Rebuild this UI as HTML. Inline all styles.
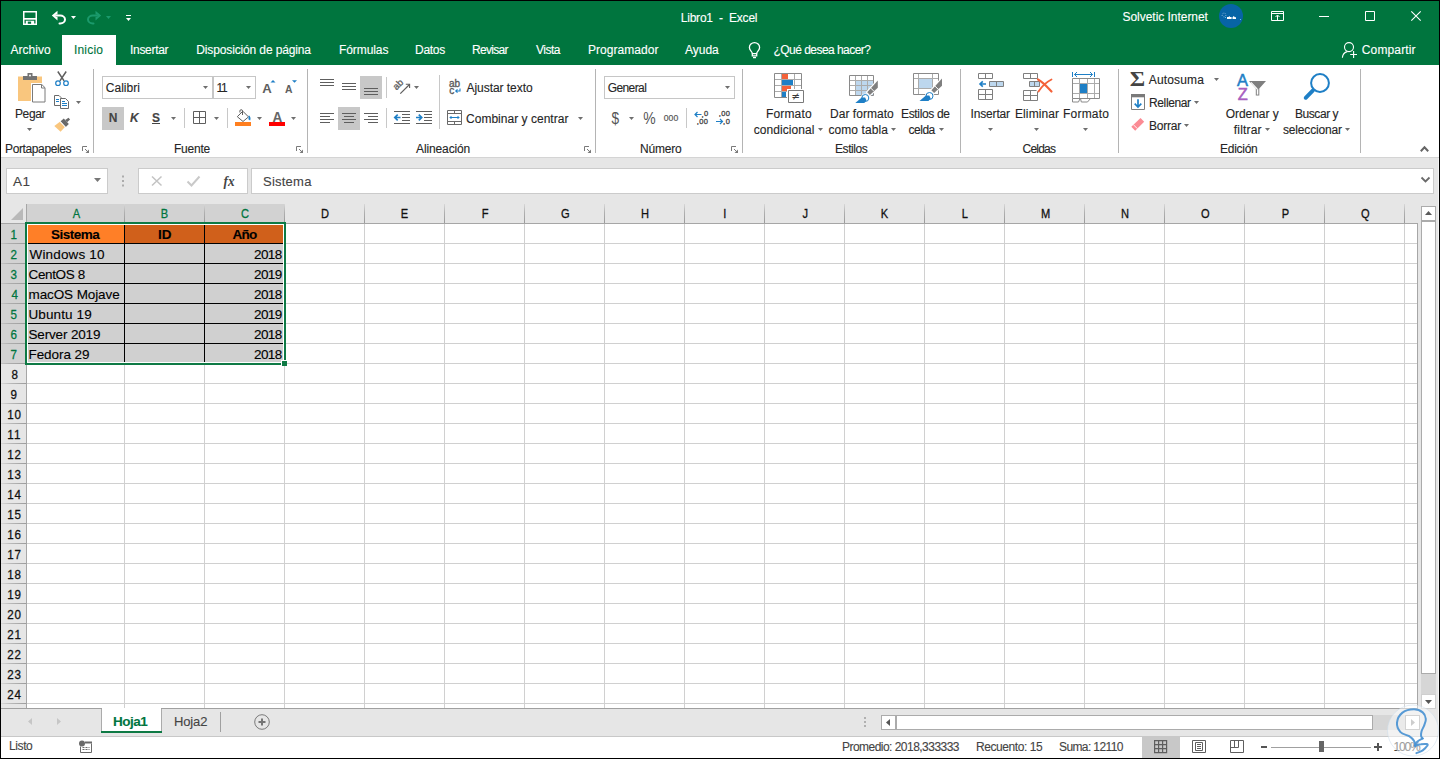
<!DOCTYPE html>
<html lang="es"><head><meta charset="utf-8"><title>Libro1 - Excel</title>
<style>
html,body{margin:0;padding:0;}
body{width:1440px;height:759px;overflow:hidden;background:#000;position:relative;font-family:'Liberation Sans',sans-serif;}
#app{position:absolute;left:0;top:0;width:1440px;height:759px;overflow:hidden;}
#app div,#app svg,#app span{position:absolute;box-sizing:content-box;}
#app svg{overflow:visible;}
.t{white-space:pre;line-height:20px;height:20px;-webkit-text-stroke:0.12px currentColor;}
</style></head>
<body>
<div id="app">
<div style="left:1px;top:1px;width:1438px;height:64px;background:#00753E;"></div>
<div style="left:62px;top:35px;width:54px;height:30px;background:#FFFFFF;"></div>
<div style="left:1px;top:65px;width:1438px;height:92px;background:#FFFFFF;"></div>
<div style="left:1px;top:157px;width:1438px;height:1px;background:#D4D4D4;"></div>
<div style="left:1px;top:158px;width:1438px;height:46px;background:#E6E6E6;"></div>
<div style="left:1px;top:204px;width:1438px;height:505px;background:#E6E6E6;"></div>
<div style="left:27px;top:224px;width:1390px;height:484px;background:#FFFFFF;"></div>
<div style="left:1px;top:709px;width:1438px;height:27px;background:#E6E6E6;"></div>
<div style="left:1px;top:736px;width:1438px;height:1px;background:#C8C8C8;"></div>
<div style="left:1px;top:737px;width:1438px;height:21px;background:#FFFFFF;"></div>
<div style="left:1438px;top:158px;width:1px;height:579px;background:#F4F4F4;"></div>
<span class="t" style="left:680.75px;top:8px;font-size:12px;color:#fff;letter-spacing:-0.217px;">Libro1  -  Excel</span>
<span class="t" style="left:1122.5px;top:7px;font-size:12px;color:#fff;letter-spacing:-0.037px;">Solvetic Internet</span>
<div style="left:1219px;top:4px;width:24px;height:24px;border-radius:12px;background:#0764A6"></div>
<span class="t" style="left:10.5px;top:40px;font-size:12px;color:#fff;letter-spacing:0.017px;">Archivo</span>
<span class="t" style="left:130.0px;top:40px;font-size:12px;color:#fff;letter-spacing:-0.300px;">Insertar</span>
<span class="t" style="left:196.25px;top:40px;font-size:12px;color:#fff;letter-spacing:-0.133px;">Disposición de página</span>
<span class="t" style="left:339.0px;top:40px;font-size:12px;color:#fff;letter-spacing:-0.086px;">Fórmulas</span>
<span class="t" style="left:415.0px;top:40px;font-size:12px;color:#fff;letter-spacing:-0.275px;">Datos</span>
<span class="t" style="left:472.0px;top:40px;font-size:12px;color:#fff;letter-spacing:-0.683px;">Revisar</span>
<span class="t" style="left:536.0px;top:40px;font-size:12px;color:#fff;letter-spacing:-0.525px;">Vista</span>
<span class="t" style="left:588.0px;top:40px;font-size:12px;color:#fff;letter-spacing:0.040px;">Programador</span>
<span class="t" style="left:685.0px;top:40px;font-size:12px;color:#fff;letter-spacing:-0.025px;">Ayuda</span>
<span class="t" style="left:773.5px;top:40px;font-size:12px;color:#fff;letter-spacing:-0.538px;">¿Qué desea hacer?</span>
<span class="t" style="left:1361.75px;top:40px;font-size:12px;color:#fff;letter-spacing:0.144px;">Compartir</span>
<span class="t" style="left:74.0px;top:40px;font-size:12px;color:#00753E;letter-spacing:0.180px;">Inicio</span>
<span class="t" style="left:5.0px;top:139px;font-size:12px;color:#262626;letter-spacing:-0.373px;">Portapapeles</span>
<span class="t" style="left:174.0px;top:139px;font-size:12px;color:#262626;letter-spacing:-0.220px;">Fuente</span>
<span class="t" style="left:416.0px;top:139px;font-size:12px;color:#262626;letter-spacing:-0.122px;">Alineación</span>
<span class="t" style="left:640.0px;top:139px;font-size:12px;color:#262626;letter-spacing:-0.220px;">Número</span>
<span class="t" style="left:835.0px;top:139px;font-size:12px;color:#262626;letter-spacing:-0.433px;">Estilos</span>
<span class="t" style="left:1022.5px;top:139px;font-size:12px;color:#262626;letter-spacing:-0.780px;">Celdas</span>
<span class="t" style="left:1220.0px;top:139px;font-size:12px;color:#262626;letter-spacing:-0.267px;">Edición</span>
<div style="left:93px;top:69px;width:1px;height:84px;background:#B4B4B4;"></div>
<div style="left:307px;top:69px;width:1px;height:84px;background:#B4B4B4;"></div>
<div style="left:595px;top:69px;width:1px;height:84px;background:#B4B4B4;"></div>
<div style="left:742px;top:69px;width:1px;height:84px;background:#B4B4B4;"></div>
<div style="left:960px;top:69px;width:1px;height:84px;background:#B4B4B4;"></div>
<div style="left:1118px;top:69px;width:1px;height:84px;background:#B4B4B4;"></div>
<div style="left:1360px;top:69px;width:1px;height:84px;background:#B4B4B4;"></div>
<div style="left:184px;top:108px;width:1px;height:20px;background:#C8C8C8;"></div>
<div style="left:227px;top:108px;width:1px;height:20px;background:#C8C8C8;"></div>
<div style="left:386px;top:77px;width:1px;height:21px;background:#C8C8C8;"></div>
<div style="left:386px;top:108px;width:1px;height:20px;background:#C8C8C8;"></div>
<div style="left:439px;top:75px;width:1px;height:54px;background:#C8C8C8;"></div>
<div style="left:686px;top:108px;width:1px;height:20px;background:#C8C8C8;"></div>
<div style="left:102px;top:76px;width:109px;height:21px;background:#FFFFFF;border:1px solid #C6C6C6;"></div>
<div style="left:213px;top:76px;width:41px;height:21px;background:#FFFFFF;border:1px solid #C6C6C6;"></div>
<div style="left:604px;top:76px;width:129px;height:21px;background:#FFFFFF;border:1px solid #C6C6C6;"></div>
<div style="left:102px;top:107px;width:22px;height:23px;background:#C8C8C8;"></div>
<div style="left:360px;top:76px;width:22px;height:23px;background:#C8C8C8;"></div>
<div style="left:338px;top:107px;width:22px;height:23px;background:#C8C8C8;"></div>
<span class="t" style="left:15.0px;top:104px;font-size:12px;color:#262626;letter-spacing:-0.400px;">Pegar</span>
<span class="t" style="left:105.75px;top:78px;font-size:12px;color:#262626;letter-spacing:0.025px;">Calibri</span>
<span class="t" style="left:216.5px;top:78px;font-size:12px;color:#262626;letter-spacing:-1.200px;">11</span>
<span class="t" style="left:108.75px;top:108px;font-size:12px;color:#444;letter-spacing:0.000px;font-weight:700;">N</span>
<span class="t" style="left:130.0px;top:108px;font-size:12px;color:#444;letter-spacing:0.000px;font-weight:700;font-style:italic;">K</span>
<span class="t" style="left:152.0px;top:108px;font-size:12px;color:#444;letter-spacing:0.000px;font-weight:700;text-decoration:underline;">S</span>
<span class="t" style="left:466.5px;top:78px;font-size:12px;color:#262626;letter-spacing:-0.050px;">Ajustar texto</span>
<span class="t" style="left:466.0px;top:109px;font-size:12px;color:#262626;letter-spacing:0.024px;">Combinar y centrar</span>
<span class="t" style="left:607.75px;top:78px;font-size:12px;color:#262626;letter-spacing:-0.608px;">General</span>
<span class="t" style="left:766.0px;top:104px;font-size:12px;color:#262626;letter-spacing:0.150px;">Formato</span>
<span class="t" style="left:753.75px;top:120px;font-size:12px;color:#262626;letter-spacing:0.065px;">condicional</span>
<span class="t" style="left:830.0px;top:104px;font-size:12px;color:#262626;letter-spacing:0.040px;">Dar formato</span>
<span class="t" style="left:828.5px;top:120px;font-size:12px;color:#262626;letter-spacing:0.067px;">como tabla</span>
<span class="t" style="left:901.0px;top:104px;font-size:12px;color:#262626;letter-spacing:-0.344px;">Estilos de</span>
<span class="t" style="left:908.5px;top:120px;font-size:12px;color:#262626;letter-spacing:-0.475px;">celda</span>
<span class="t" style="left:970.5px;top:104px;font-size:12px;color:#262626;letter-spacing:-0.157px;">Insertar</span>
<span class="t" style="left:1015.0px;top:104px;font-size:12px;color:#262626;letter-spacing:0.100px;">Eliminar</span>
<span class="t" style="left:1063.0px;top:104px;font-size:12px;color:#262626;letter-spacing:0.217px;">Formato</span>
<span class="t" style="left:1148.75px;top:70px;font-size:12px;color:#262626;letter-spacing:0.164px;">Autosuma</span>
<span class="t" style="left:1149.0px;top:93px;font-size:12px;color:#262626;letter-spacing:-0.371px;">Rellenar</span>
<span class="t" style="left:1149.0px;top:116px;font-size:12px;color:#262626;letter-spacing:-0.220px;">Borrar</span>
<span class="t" style="left:1225.75px;top:104px;font-size:12px;color:#262626;letter-spacing:-0.056px;">Ordenar y</span>
<span class="t" style="left:1233.75px;top:120px;font-size:12px;color:#262626;letter-spacing:0.192px;">filtrar</span>
<span class="t" style="left:1295.0px;top:104px;font-size:12px;color:#262626;letter-spacing:-0.443px;">Buscar y</span>
<span class="t" style="left:1283.0px;top:120px;font-size:12px;color:#262626;letter-spacing:-0.170px;">seleccionar</span>
<div style="left:6px;top:168px;width:100px;height:24px;background:#FFFFFF;border:1px solid #CBCBCB;"></div>
<div style="left:138px;top:168px;width:108px;height:24px;background:#FFFFFF;border:1px solid #CBCBCB;"></div>
<div style="left:251px;top:168px;width:1181px;height:24px;background:#FFFFFF;border:1px solid #CBCBCB;"></div>
<span class="t" style="left:13.0px;top:172px;font-size:13.5px;color:#444;letter-spacing:0.400px;">A1</span>
<span class="t" style="left:263.0px;top:172px;font-size:13px;color:#444;letter-spacing:0.233px;">Sistema</span>
<div style="left:27px;top:204px;width:258px;height:19px;background:#D2D2D2;"></div>
<div style="left:1px;top:224px;width:25px;height:140px;background:#D2D2D2;"></div>
<div style="left:124px;top:204px;width:1px;height:19px;background:linear-gradient(#D8D8D8,#B0B0B0 45%,#9A9A9A);"></div>
<div style="left:204px;top:204px;width:1px;height:19px;background:linear-gradient(#D8D8D8,#B0B0B0 45%,#9A9A9A);"></div>
<div style="left:284px;top:204px;width:1px;height:19px;background:linear-gradient(#D8D8D8,#B0B0B0 45%,#9A9A9A);"></div>
<div style="left:364px;top:204px;width:1px;height:19px;background:linear-gradient(#D8D8D8,#B0B0B0 45%,#9A9A9A);"></div>
<div style="left:444px;top:204px;width:1px;height:19px;background:linear-gradient(#D8D8D8,#B0B0B0 45%,#9A9A9A);"></div>
<div style="left:524px;top:204px;width:1px;height:19px;background:linear-gradient(#D8D8D8,#B0B0B0 45%,#9A9A9A);"></div>
<div style="left:604px;top:204px;width:1px;height:19px;background:linear-gradient(#D8D8D8,#B0B0B0 45%,#9A9A9A);"></div>
<div style="left:684px;top:204px;width:1px;height:19px;background:linear-gradient(#D8D8D8,#B0B0B0 45%,#9A9A9A);"></div>
<div style="left:764px;top:204px;width:1px;height:19px;background:linear-gradient(#D8D8D8,#B0B0B0 45%,#9A9A9A);"></div>
<div style="left:844px;top:204px;width:1px;height:19px;background:linear-gradient(#D8D8D8,#B0B0B0 45%,#9A9A9A);"></div>
<div style="left:924px;top:204px;width:1px;height:19px;background:linear-gradient(#D8D8D8,#B0B0B0 45%,#9A9A9A);"></div>
<div style="left:1004px;top:204px;width:1px;height:19px;background:linear-gradient(#D8D8D8,#B0B0B0 45%,#9A9A9A);"></div>
<div style="left:1084px;top:204px;width:1px;height:19px;background:linear-gradient(#D8D8D8,#B0B0B0 45%,#9A9A9A);"></div>
<div style="left:1164px;top:204px;width:1px;height:19px;background:linear-gradient(#D8D8D8,#B0B0B0 45%,#9A9A9A);"></div>
<div style="left:1244px;top:204px;width:1px;height:19px;background:linear-gradient(#D8D8D8,#B0B0B0 45%,#9A9A9A);"></div>
<div style="left:1324px;top:204px;width:1px;height:19px;background:linear-gradient(#D8D8D8,#B0B0B0 45%,#9A9A9A);"></div>
<div style="left:1404px;top:204px;width:1px;height:19px;background:linear-gradient(#D8D8D8,#B0B0B0 45%,#9A9A9A);"></div>
<div style="left:1px;top:243px;width:25px;height:1px;background:linear-gradient(90deg,#C4C4C4,#ABABAB 40%,#9C9C9C);"></div>
<div style="left:1px;top:263px;width:25px;height:1px;background:linear-gradient(90deg,#C4C4C4,#ABABAB 40%,#9C9C9C);"></div>
<div style="left:1px;top:283px;width:25px;height:1px;background:linear-gradient(90deg,#C4C4C4,#ABABAB 40%,#9C9C9C);"></div>
<div style="left:1px;top:303px;width:25px;height:1px;background:linear-gradient(90deg,#C4C4C4,#ABABAB 40%,#9C9C9C);"></div>
<div style="left:1px;top:323px;width:25px;height:1px;background:linear-gradient(90deg,#C4C4C4,#ABABAB 40%,#9C9C9C);"></div>
<div style="left:1px;top:343px;width:25px;height:1px;background:linear-gradient(90deg,#C4C4C4,#ABABAB 40%,#9C9C9C);"></div>
<div style="left:1px;top:363px;width:25px;height:1px;background:linear-gradient(90deg,#C4C4C4,#ABABAB 40%,#9C9C9C);"></div>
<div style="left:1px;top:383px;width:25px;height:1px;background:linear-gradient(90deg,#DADADA,#B8B8B8 40%,#9C9C9C);"></div>
<div style="left:1px;top:403px;width:25px;height:1px;background:linear-gradient(90deg,#DADADA,#B8B8B8 40%,#9C9C9C);"></div>
<div style="left:1px;top:423px;width:25px;height:1px;background:linear-gradient(90deg,#DADADA,#B8B8B8 40%,#9C9C9C);"></div>
<div style="left:1px;top:443px;width:25px;height:1px;background:linear-gradient(90deg,#DADADA,#B8B8B8 40%,#9C9C9C);"></div>
<div style="left:1px;top:463px;width:25px;height:1px;background:linear-gradient(90deg,#DADADA,#B8B8B8 40%,#9C9C9C);"></div>
<div style="left:1px;top:483px;width:25px;height:1px;background:linear-gradient(90deg,#DADADA,#B8B8B8 40%,#9C9C9C);"></div>
<div style="left:1px;top:503px;width:25px;height:1px;background:linear-gradient(90deg,#DADADA,#B8B8B8 40%,#9C9C9C);"></div>
<div style="left:1px;top:523px;width:25px;height:1px;background:linear-gradient(90deg,#DADADA,#B8B8B8 40%,#9C9C9C);"></div>
<div style="left:1px;top:543px;width:25px;height:1px;background:linear-gradient(90deg,#DADADA,#B8B8B8 40%,#9C9C9C);"></div>
<div style="left:1px;top:563px;width:25px;height:1px;background:linear-gradient(90deg,#DADADA,#B8B8B8 40%,#9C9C9C);"></div>
<div style="left:1px;top:583px;width:25px;height:1px;background:linear-gradient(90deg,#DADADA,#B8B8B8 40%,#9C9C9C);"></div>
<div style="left:1px;top:603px;width:25px;height:1px;background:linear-gradient(90deg,#DADADA,#B8B8B8 40%,#9C9C9C);"></div>
<div style="left:1px;top:623px;width:25px;height:1px;background:linear-gradient(90deg,#DADADA,#B8B8B8 40%,#9C9C9C);"></div>
<div style="left:1px;top:643px;width:25px;height:1px;background:linear-gradient(90deg,#DADADA,#B8B8B8 40%,#9C9C9C);"></div>
<div style="left:1px;top:663px;width:25px;height:1px;background:linear-gradient(90deg,#DADADA,#B8B8B8 40%,#9C9C9C);"></div>
<div style="left:1px;top:683px;width:25px;height:1px;background:linear-gradient(90deg,#DADADA,#B8B8B8 40%,#9C9C9C);"></div>
<div style="left:1px;top:703px;width:25px;height:1px;background:linear-gradient(90deg,#DADADA,#B8B8B8 40%,#9C9C9C);"></div>
<div style="left:27px;top:243px;width:1390px;height:1px;background:#D0D0D0;"></div>
<div style="left:27px;top:263px;width:1390px;height:1px;background:#D0D0D0;"></div>
<div style="left:27px;top:283px;width:1390px;height:1px;background:#D0D0D0;"></div>
<div style="left:27px;top:303px;width:1390px;height:1px;background:#D0D0D0;"></div>
<div style="left:27px;top:323px;width:1390px;height:1px;background:#D0D0D0;"></div>
<div style="left:27px;top:343px;width:1390px;height:1px;background:#D0D0D0;"></div>
<div style="left:27px;top:363px;width:1390px;height:1px;background:#D0D0D0;"></div>
<div style="left:27px;top:383px;width:1390px;height:1px;background:#D0D0D0;"></div>
<div style="left:27px;top:403px;width:1390px;height:1px;background:#D0D0D0;"></div>
<div style="left:27px;top:423px;width:1390px;height:1px;background:#D0D0D0;"></div>
<div style="left:27px;top:443px;width:1390px;height:1px;background:#D0D0D0;"></div>
<div style="left:27px;top:463px;width:1390px;height:1px;background:#D0D0D0;"></div>
<div style="left:27px;top:483px;width:1390px;height:1px;background:#D0D0D0;"></div>
<div style="left:27px;top:503px;width:1390px;height:1px;background:#D0D0D0;"></div>
<div style="left:27px;top:523px;width:1390px;height:1px;background:#D0D0D0;"></div>
<div style="left:27px;top:543px;width:1390px;height:1px;background:#D0D0D0;"></div>
<div style="left:27px;top:563px;width:1390px;height:1px;background:#D0D0D0;"></div>
<div style="left:27px;top:583px;width:1390px;height:1px;background:#D0D0D0;"></div>
<div style="left:27px;top:603px;width:1390px;height:1px;background:#D0D0D0;"></div>
<div style="left:27px;top:623px;width:1390px;height:1px;background:#D0D0D0;"></div>
<div style="left:27px;top:643px;width:1390px;height:1px;background:#D0D0D0;"></div>
<div style="left:27px;top:663px;width:1390px;height:1px;background:#D0D0D0;"></div>
<div style="left:27px;top:683px;width:1390px;height:1px;background:#D0D0D0;"></div>
<div style="left:27px;top:703px;width:1390px;height:1px;background:#D0D0D0;"></div>
<div style="left:124px;top:224px;width:1px;height:484px;background:#D0D0D0;"></div>
<div style="left:204px;top:224px;width:1px;height:484px;background:#D0D0D0;"></div>
<div style="left:284px;top:224px;width:1px;height:484px;background:#D0D0D0;"></div>
<div style="left:364px;top:224px;width:1px;height:484px;background:#D0D0D0;"></div>
<div style="left:444px;top:224px;width:1px;height:484px;background:#D0D0D0;"></div>
<div style="left:524px;top:224px;width:1px;height:484px;background:#D0D0D0;"></div>
<div style="left:604px;top:224px;width:1px;height:484px;background:#D0D0D0;"></div>
<div style="left:684px;top:224px;width:1px;height:484px;background:#D0D0D0;"></div>
<div style="left:764px;top:224px;width:1px;height:484px;background:#D0D0D0;"></div>
<div style="left:844px;top:224px;width:1px;height:484px;background:#D0D0D0;"></div>
<div style="left:924px;top:224px;width:1px;height:484px;background:#D0D0D0;"></div>
<div style="left:1004px;top:224px;width:1px;height:484px;background:#D0D0D0;"></div>
<div style="left:1084px;top:224px;width:1px;height:484px;background:#D0D0D0;"></div>
<div style="left:1164px;top:224px;width:1px;height:484px;background:#D0D0D0;"></div>
<div style="left:1244px;top:224px;width:1px;height:484px;background:#D0D0D0;"></div>
<div style="left:1324px;top:224px;width:1px;height:484px;background:#D0D0D0;"></div>
<div style="left:1404px;top:224px;width:1px;height:484px;background:#D0D0D0;"></div>
<div style="left:1px;top:223px;width:1417px;height:1px;background:#A6A6A6;"></div>
<div style="left:26px;top:204px;width:1px;height:505px;background:#A6A6A6;"></div>
<div style="left:1417px;top:223px;width:1px;height:486px;background:#A6A6A6;"></div>
<div style="left:1px;top:708px;width:1417px;height:1px;background:#A0A0A0;"></div>
<svg style="left:11px;top:208px;" width="12" height="12" viewBox="0 0 12 12"><path d="M12 0V12H0Z" fill="#B9B9B9"/></svg>
<span class="t" style="left:71.5px;top:204px;font-size:13.5px;color:#00753E;letter-spacing:0.000px;transform:scaleX(.82);-webkit-text-stroke:0.3px currentColor;">A</span>
<span class="t" style="left:160.0px;top:204px;font-size:13.5px;color:#00753E;letter-spacing:0.000px;transform:scaleX(.82);-webkit-text-stroke:0.3px currentColor;">B</span>
<span class="t" style="left:240.0px;top:204px;font-size:13.5px;color:#00753E;letter-spacing:0.000px;transform:scaleX(.82);-webkit-text-stroke:0.3px currentColor;">C</span>
<span class="t" style="left:320.0px;top:204px;font-size:13.5px;color:#111;letter-spacing:0.000px;transform:scaleX(.82);-webkit-text-stroke:0.3px currentColor;">D</span>
<span class="t" style="left:400.0px;top:204px;font-size:13.5px;color:#111;letter-spacing:0.000px;transform:scaleX(.82);-webkit-text-stroke:0.3px currentColor;">E</span>
<span class="t" style="left:480.5px;top:204px;font-size:13.5px;color:#111;letter-spacing:0.000px;transform:scaleX(.82);-webkit-text-stroke:0.3px currentColor;">F</span>
<span class="t" style="left:559.5px;top:204px;font-size:13.5px;color:#111;letter-spacing:0.000px;transform:scaleX(.82);-webkit-text-stroke:0.3px currentColor;">G</span>
<span class="t" style="left:640.0px;top:204px;font-size:13.5px;color:#111;letter-spacing:0.000px;transform:scaleX(.82);-webkit-text-stroke:0.3px currentColor;">H</span>
<span class="t" style="left:723.0px;top:204px;font-size:13.5px;color:#111;letter-spacing:0.000px;transform:scaleX(.82);-webkit-text-stroke:0.3px currentColor;">I</span>
<span class="t" style="left:802.0px;top:204px;font-size:13.5px;color:#111;letter-spacing:0.000px;transform:scaleX(.82);-webkit-text-stroke:0.3px currentColor;">J</span>
<span class="t" style="left:880.0px;top:204px;font-size:13.5px;color:#111;letter-spacing:0.000px;transform:scaleX(.82);-webkit-text-stroke:0.3px currentColor;">K</span>
<span class="t" style="left:961.0px;top:204px;font-size:13.5px;color:#111;letter-spacing:0.000px;transform:scaleX(.82);-webkit-text-stroke:0.3px currentColor;">L</span>
<span class="t" style="left:1039.5px;top:204px;font-size:13.5px;color:#111;letter-spacing:0.000px;transform:scaleX(.82);-webkit-text-stroke:0.3px currentColor;">M</span>
<span class="t" style="left:1120.0px;top:204px;font-size:13.5px;color:#111;letter-spacing:0.000px;transform:scaleX(.82);-webkit-text-stroke:0.3px currentColor;">N</span>
<span class="t" style="left:1199.5px;top:204px;font-size:13.5px;color:#111;letter-spacing:0.000px;transform:scaleX(.82);-webkit-text-stroke:0.3px currentColor;">O</span>
<span class="t" style="left:1280.5px;top:204px;font-size:13.5px;color:#111;letter-spacing:0.000px;transform:scaleX(.82);-webkit-text-stroke:0.3px currentColor;">P</span>
<span class="t" style="left:1359.5px;top:204px;font-size:13.5px;color:#111;letter-spacing:0.000px;transform:scaleX(.82);-webkit-text-stroke:0.3px currentColor;">Q</span>
<span class="t" style="left:10.0px;top:225px;font-size:13.5px;color:#00753E;letter-spacing:0.000px;transform:scaleX(.86);-webkit-text-stroke:0.3px currentColor;">1</span>
<span class="t" style="left:10.0px;top:245px;font-size:13.5px;color:#00753E;letter-spacing:0.000px;transform:scaleX(.86);-webkit-text-stroke:0.3px currentColor;">2</span>
<span class="t" style="left:10.0px;top:265px;font-size:13.5px;color:#00753E;letter-spacing:0.000px;transform:scaleX(.86);-webkit-text-stroke:0.3px currentColor;">3</span>
<span class="t" style="left:10.5px;top:285px;font-size:13.5px;color:#00753E;letter-spacing:0.000px;transform:scaleX(.86);-webkit-text-stroke:0.3px currentColor;">4</span>
<span class="t" style="left:10.0px;top:305px;font-size:13.5px;color:#00753E;letter-spacing:0.000px;transform:scaleX(.86);-webkit-text-stroke:0.3px currentColor;">5</span>
<span class="t" style="left:10.0px;top:325px;font-size:13.5px;color:#00753E;letter-spacing:0.000px;transform:scaleX(.86);-webkit-text-stroke:0.3px currentColor;">6</span>
<span class="t" style="left:10.0px;top:345px;font-size:13.5px;color:#00753E;letter-spacing:0.000px;transform:scaleX(.86);-webkit-text-stroke:0.3px currentColor;">7</span>
<span class="t" style="left:10.5px;top:365px;font-size:13.5px;color:#111;letter-spacing:0.000px;transform:scaleX(.86);-webkit-text-stroke:0.3px currentColor;">8</span>
<span class="t" style="left:10.0px;top:385px;font-size:13.5px;color:#111;letter-spacing:0.000px;transform:scaleX(.86);-webkit-text-stroke:0.3px currentColor;">9</span>
<span class="t" style="left:5.5px;top:405px;font-size:13.5px;color:#111;letter-spacing:1.049px;transform:scaleX(.86);-webkit-text-stroke:0.3px currentColor;">10</span>
<span class="t" style="left:5.5px;top:425px;font-size:13.5px;color:#111;letter-spacing:1.500px;transform:scaleX(.86);-webkit-text-stroke:0.3px currentColor;">11</span>
<span class="t" style="left:5.5px;top:445px;font-size:13.5px;color:#111;letter-spacing:1.049px;transform:scaleX(.86);-webkit-text-stroke:0.3px currentColor;">12</span>
<span class="t" style="left:5.5px;top:465px;font-size:13.5px;color:#111;letter-spacing:1.049px;transform:scaleX(.86);-webkit-text-stroke:0.3px currentColor;">13</span>
<span class="t" style="left:5.5px;top:485px;font-size:13.5px;color:#111;letter-spacing:1.049px;transform:scaleX(.86);-webkit-text-stroke:0.3px currentColor;">14</span>
<span class="t" style="left:5.5px;top:505px;font-size:13.5px;color:#111;letter-spacing:1.049px;transform:scaleX(.86);-webkit-text-stroke:0.3px currentColor;">15</span>
<span class="t" style="left:5.5px;top:525px;font-size:13.5px;color:#111;letter-spacing:1.049px;transform:scaleX(.86);-webkit-text-stroke:0.3px currentColor;">16</span>
<span class="t" style="left:5.5px;top:545px;font-size:13.5px;color:#111;letter-spacing:1.049px;transform:scaleX(.86);-webkit-text-stroke:0.3px currentColor;">17</span>
<span class="t" style="left:5.5px;top:565px;font-size:13.5px;color:#111;letter-spacing:1.049px;transform:scaleX(.86);-webkit-text-stroke:0.3px currentColor;">18</span>
<span class="t" style="left:5.5px;top:585px;font-size:13.5px;color:#111;letter-spacing:1.049px;transform:scaleX(.86);-webkit-text-stroke:0.3px currentColor;">19</span>
<span class="t" style="left:5.5px;top:605px;font-size:13.5px;color:#111;letter-spacing:1.049px;transform:scaleX(.86);-webkit-text-stroke:0.3px currentColor;">20</span>
<span class="t" style="left:5.5px;top:625px;font-size:13.5px;color:#111;letter-spacing:1.049px;transform:scaleX(.86);-webkit-text-stroke:0.3px currentColor;">21</span>
<span class="t" style="left:5.5px;top:645px;font-size:13.5px;color:#111;letter-spacing:1.049px;transform:scaleX(.86);-webkit-text-stroke:0.3px currentColor;">22</span>
<span class="t" style="left:5.5px;top:665px;font-size:13.5px;color:#111;letter-spacing:1.049px;transform:scaleX(.86);-webkit-text-stroke:0.3px currentColor;">23</span>
<span class="t" style="left:5.5px;top:685px;font-size:13.5px;color:#111;letter-spacing:1.049px;transform:scaleX(.86);-webkit-text-stroke:0.3px currentColor;">24</span>
<div style="left:28px;top:225px;width:96px;height:18px;background:#FF7F27;"></div>
<div style="left:125px;top:225px;width:79px;height:18px;background:#D0601B;"></div>
<div style="left:205px;top:225px;width:78px;height:18px;background:#D0601B;"></div>
<div style="left:28px;top:244px;width:96px;height:19px;background:#D0D0D0;"></div>
<div style="left:125px;top:244px;width:79px;height:19px;background:#D0D0D0;"></div>
<div style="left:205px;top:244px;width:78px;height:19px;background:#D0D0D0;"></div>
<div style="left:28px;top:264px;width:96px;height:19px;background:#D0D0D0;"></div>
<div style="left:125px;top:264px;width:79px;height:19px;background:#D0D0D0;"></div>
<div style="left:205px;top:264px;width:78px;height:19px;background:#D0D0D0;"></div>
<div style="left:28px;top:284px;width:96px;height:19px;background:#D0D0D0;"></div>
<div style="left:125px;top:284px;width:79px;height:19px;background:#D0D0D0;"></div>
<div style="left:205px;top:284px;width:78px;height:19px;background:#D0D0D0;"></div>
<div style="left:28px;top:304px;width:96px;height:19px;background:#D0D0D0;"></div>
<div style="left:125px;top:304px;width:79px;height:19px;background:#D0D0D0;"></div>
<div style="left:205px;top:304px;width:78px;height:19px;background:#D0D0D0;"></div>
<div style="left:28px;top:324px;width:96px;height:19px;background:#D0D0D0;"></div>
<div style="left:125px;top:324px;width:79px;height:19px;background:#D0D0D0;"></div>
<div style="left:205px;top:324px;width:78px;height:19px;background:#D0D0D0;"></div>
<div style="left:28px;top:344px;width:96px;height:18px;background:#D0D0D0;"></div>
<div style="left:125px;top:344px;width:79px;height:18px;background:#D0D0D0;"></div>
<div style="left:205px;top:344px;width:78px;height:18px;background:#D0D0D0;"></div>
<div style="left:28px;top:243px;width:255px;height:1px;background:#000;"></div>
<div style="left:28px;top:263px;width:255px;height:1px;background:#000;"></div>
<div style="left:28px;top:283px;width:255px;height:1px;background:#000;"></div>
<div style="left:28px;top:303px;width:255px;height:1px;background:#000;"></div>
<div style="left:28px;top:323px;width:255px;height:1px;background:#000;"></div>
<div style="left:28px;top:343px;width:255px;height:1px;background:#000;"></div>
<div style="left:124px;top:225px;width:1px;height:137px;background:#000;"></div>
<div style="left:204px;top:225px;width:1px;height:137px;background:#000;"></div>
<div style="left:27px;top:224px;width:257px;height:1px;background:#FFFFFF;"></div>
<div style="left:27px;top:224px;width:1px;height:139px;background:#FFFFFF;"></div>
<div style="left:283px;top:224px;width:1px;height:137px;background:#FFFFFF;"></div>
<div style="left:27px;top:362px;width:255px;height:1px;background:#FFFFFF;"></div>
<div style="left:25px;top:222px;width:261px;height:2px;background:#0E7A45;"></div>
<div style="left:25px;top:222px;width:2px;height:143px;background:#0E7A45;"></div>
<div style="left:284px;top:222px;width:2px;height:139px;background:#0E7A45;"></div>
<div style="left:25px;top:363px;width:256px;height:2px;background:#0E7A45;"></div>
<div style="left:281px;top:360px;width:6px;height:6px;background:#FFFFFF;"></div>
<div style="left:282px;top:361px;width:5px;height:5px;background:#0E7A45;"></div>
<span class="t" style="left:51.0px;top:225px;font-size:13.5px;color:#000;letter-spacing:-0.517px;font-weight:700;">Sistema</span>
<span class="t" style="left:158.0px;top:225px;font-size:13.5px;color:#000;letter-spacing:-0.100px;font-weight:700;">ID</span>
<span class="t" style="left:232.5px;top:225px;font-size:13.5px;color:#000;letter-spacing:-0.800px;font-weight:700;">Año</span>
<span class="t" style="left:29.5px;top:245px;font-size:13.5px;color:#000;letter-spacing:0.156px;">Windows 10</span>
<span class="t" style="left:254.0px;top:245px;font-size:13.5px;color:#000;letter-spacing:-0.600px;">2018</span>
<span class="t" style="left:28.5px;top:265px;font-size:13.5px;color:#000;letter-spacing:-0.371px;">CentOS 8</span>
<span class="t" style="left:254.0px;top:265px;font-size:13.5px;color:#000;letter-spacing:-0.600px;">2019</span>
<span class="t" style="left:28.5px;top:285px;font-size:13.5px;color:#000;letter-spacing:-0.100px;">macOS Mojave</span>
<span class="t" style="left:254.0px;top:285px;font-size:13.5px;color:#000;letter-spacing:-0.600px;">2018</span>
<span class="t" style="left:28.5px;top:305px;font-size:13.5px;color:#000;letter-spacing:0.113px;">Ubuntu 19</span>
<span class="t" style="left:254.0px;top:305px;font-size:13.5px;color:#000;letter-spacing:-0.600px;">2019</span>
<span class="t" style="left:28.5px;top:325px;font-size:13.5px;color:#000;letter-spacing:-0.160px;">Server 2019</span>
<span class="t" style="left:254.0px;top:325px;font-size:13.5px;color:#000;letter-spacing:-0.600px;">2018</span>
<span class="t" style="left:28.5px;top:345px;font-size:13.5px;color:#000;letter-spacing:-0.075px;">Fedora 29</span>
<span class="t" style="left:254.0px;top:345px;font-size:13.5px;color:#000;letter-spacing:-0.600px;">2018</span>
<div style="left:1421px;top:206px;width:13px;height:13px;background:#FFFFFF;border:1px solid #ABABAB;"></div>
<div style="left:1421px;top:221px;width:13px;height:451px;background:#FFFFFF;border:1px solid #ABABAB;"></div>
<div style="left:1421px;top:674px;width:15px;height:20px;background:#D6D6D6;"></div>
<div style="left:1421px;top:694px;width:13px;height:13px;background:#FFFFFF;border:1px solid #CFCFCF;"></div>
<svg style="left:1425px;top:211px;" width="7" height="4" viewBox="0 0 7 4"><path d="M0 4H7L3.5 0Z" fill="#5A5A5A"/></svg>
<svg style="left:1425px;top:700px;" width="7" height="4" viewBox="0 0 7 4"><path d="M0 0H7L3.5 4Z" fill="#555"/></svg>
<div style="left:881px;top:715px;width:13px;height:13px;background:#FFFFFF;border:1px solid #ABABAB;"></div>
<div style="left:896px;top:715px;width:475px;height:13px;background:#FFFFFF;border:1px solid #ABABAB;"></div>
<div style="left:1373px;top:715px;width:32px;height:15px;background:#D6D6D6;"></div>
<div style="left:1405px;top:715px;width:13px;height:13px;background:#FFFFFF;border:1px solid #ABABAB;"></div>
<svg style="left:886px;top:719px;" width="4" height="7" viewBox="0 0 4 7"><path d="M4 0V7L0 3.5Z" fill="#555"/></svg>
<svg style="left:1411px;top:719px;" width="4" height="7" viewBox="0 0 4 7"><path d="M0 0V7L4 3.5Z" fill="#A0A0A0"/></svg>
<div style="left:864px;top:717px;width:2px;height:2px;background:#B0B0B0;"></div>
<div style="left:864px;top:721px;width:2px;height:2px;background:#B0B0B0;"></div>
<div style="left:864px;top:725px;width:2px;height:2px;background:#B0B0B0;"></div>
<div style="left:101px;top:709px;width:61px;height:24px;background:#FFFFFF;"></div>
<div style="left:101px;top:709px;width:1px;height:24px;background:#ABABAB;"></div>
<div style="left:161px;top:709px;width:1px;height:24px;background:#ABABAB;"></div>
<div style="left:101px;top:731px;width:61px;height:2px;background:#0E7A45;"></div>
<div style="left:102px;top:708px;width:59px;height:1px;background:#FFFFFF;"></div>
<span class="t" style="left:113.0px;top:712px;font-size:13.5px;color:#00753E;letter-spacing:-0.525px;font-weight:700;">Hoja1</span>
<span class="t" style="left:174.0px;top:712px;font-size:13px;color:#444;letter-spacing:-0.150px;">Hoja2</span>
<div style="left:220px;top:712px;width:1px;height:20px;background:#A0A0A0;"></div>
<svg style="left:254px;top:714px;" width="16" height="16" viewBox="0 0 16 16"><circle cx="8" cy="8" r="7.3" fill="none" stroke="#7A7A7A" stroke-width="1"/><path d="M4.5 8H11.5M8 4.5V11.5" stroke="#757575" stroke-width="2"/></svg>
<svg style="left:28px;top:718px;" width="4" height="7" viewBox="0 0 4 7"><path d="M4 0V7L0 3.5Z" fill="#C6C6C6"/></svg>
<svg style="left:57px;top:718px;" width="4" height="7" viewBox="0 0 4 7"><path d="M0 0V7L4 3.5Z" fill="#C6C6C6"/></svg>
<span class="t" style="left:9.0px;top:736px;font-size:12px;color:#444;letter-spacing:-0.400px;">Listo</span>
<span class="t" style="left:842.0px;top:737px;font-size:12px;color:#444;letter-spacing:-0.530px;">Promedio: 2018,333333</span>
<span class="t" style="left:976.0px;top:737px;font-size:12px;color:#444;letter-spacing:-0.418px;">Recuento: 15</span>
<span class="t" style="left:1059.0px;top:737px;font-size:12px;color:#444;letter-spacing:-0.610px;">Suma: 12110</span>
<span class="t" style="left:1393.5px;top:737px;font-size:12px;color:#444;letter-spacing:-1.200px;">100%</span>
<div style="left:1142px;top:737px;width:38px;height:21px;background:#C8C8C8;"></div>
<div style="left:1261px;top:746px;width:6px;height:2px;background:#555;"></div>
<div style="left:1271px;top:747px;width:100px;height:1px;background:#A0A0A0;"></div>
<div style="left:1319px;top:741px;width:5px;height:11px;background:#666;"></div>
<div style="left:1374px;top:746px;width:8px;height:2px;background:#555;"></div>
<div style="left:1377px;top:743px;width:2px;height:8px;background:#555;"></div>
<svg style="left:0;top:0;pointer-events:none" width="1440" height="759" viewBox="0 0 1440 759"><path d="M23.750 11.750h12.500v12.500h-12.500z" fill="none" stroke="#FFFFFF" stroke-width="1.500"/>
<path d="M24 18h12v1.700h-12z" fill="#FFFFFF"/><path d="M25.800 20.700h8.400v3.600h-8.400z" fill="#FFFFFF"/><path d="M27.800 21.600h3.300v2.200h-3.300z" fill="#00753E"/>
<path d="M51.800 15.600l5.700-4.900v3.700h-1.300l-1.400 1.200 1.400 1.200h1.300v3.700z" fill="#FFFFFF"/>
<path d="M56 15.600h4.200a4.800 3.900 0 0 1 0 7.800h-.700" fill="none" stroke="#FFFFFF" stroke-width="2" stroke-linecap="round"/>
<path d="M71.0 16h5l-2.5 3z" fill="#FFFFFF"/>
<path d="M101.200 15.600l-5.700-4.900v3.700h1.300l1.400 1.200-1.400 1.200h-1.300v3.700z" fill="#1B9A6C"/>
<path d="M97 15.600h-4.200a4.800 3.900 0 0 0 0 7.800h.700" fill="none" stroke="#1B9A6C" stroke-width="2" stroke-linecap="round"/>
<path d="M106.0 16h5l-2.5 3z" fill="#1B9A6C"/>
<path d="M126 15h5v1h-5z" fill="#FFFFFF"/>
<path d="M126.0 18h5l-2.5 3z" fill="#FFFFFF"/>
<path d="M1227 18.900v-1.900h1.500l1-1 .500 1h1.600v1.900zM1232.500 18.900v-1.700l1.300-1.200 1 1.200h1.200v1.700z" fill="#FFFFFF"/><circle cx="1224" cy="15" r="1.900" fill="none" stroke="#A9C9E6" stroke-width="0.800" stroke-dasharray="1 1.200"/><path d="M1225 17h1v1h-1zM1240 19h1v1h-1z" fill="#5CC3EE"/>
<g fill="none" stroke="#FFFFFF" stroke-width="1"><path d="M1271.5 11.5h12v9h-12z"/><path d="M1271.5 13.5h12"/><path d="M1277.5 20.5v-5M1275.5 17l2-2 2 2"/></g>
<path d="M1319 16h10v1h-10z" fill="#FFFFFF"/>
<path d="M1365.5 11.5h9v9h-9z" fill="none" stroke="#FFFFFF" stroke-width="1"/>
<path d="M1411.3 11.3l9.4 9.4M1420.7 11.3l-9.4 9.4" stroke="#FFFFFF" stroke-width="1.1" fill="none"/>
<g fill="none" stroke="#FFFFFF" stroke-width="1.3"><path d="M752.3 53.4c-.2-2-2.900-3-2.900-5.900a5.100 4.900 0 0 1 10.200 0c0 2.900-2.700 3.900-2.900 5.900"/><path d="M752.3 53.6h4.4v2.2h-4.4z"/><path d="M753 57.6h3"/></g>
<g fill="none" stroke="#FFFFFF" stroke-width="1.1"><circle cx="1349" cy="47.1" r="4.5"/><path d="M1342.4 57.8c.2-3.4 2.3-5.6 5-6.2"/><path d="M1350.2 54.5h6.8M1353.6 51.1v6.8"/></g>
<path d="M18 76.5h24v24.5h-24z" fill="#F9C67E"/>
<path d="M23 76h14v4h-14zM27.5 73h5v3.5h-5z" fill="#737373"/><circle cx="30" cy="75.6" r="1" fill="#FFFFFF"/>
<path d="M31 83h11.2l4.3 4.3v16.2h-15.5z" fill="#FFFFFF"/>
<path d="M32.5 84.5h9.3l3.2 3.2v14.3h-12.5z" fill="#FFFFFF" stroke="#7A7A7A" stroke-width="1"/><path d="M41.5 84.8v3.2h3.3" fill="none" stroke="#7A7A7A" stroke-width="1"/>
<path d="M27.0 128h5l-2.5 3z" fill="#6E6E6E"/>
<path d="M57.8 71.5l6.3 9.3M66.2 71.5l-6.3 9.3" stroke="#5E5E5E" stroke-width="1.5" fill="none"/>
<circle cx="58" cy="83.2" r="2.3" fill="none" stroke="#1E7FC6" stroke-width="1.2"/><circle cx="66" cy="83.2" r="2.3" fill="none" stroke="#1E7FC6" stroke-width="1.2"/>
<path d="M54.5 95.5h4.5l2 2v8h-6.500z" fill="#FFFFFF" stroke="#6A6A6A" stroke-width="1"/>
<path d="M60.500 98.500h5l3 3v7h-8z" fill="#FFFFFF" stroke="#6A6A6A" stroke-width="1"/>
<path d="M56 99.500h3M56 101.500h3M62 103.500h5M62 105.500h5M62 101.500h3" stroke="#1E7FC6" stroke-width="1"/>
<path d="M76.0 101h5l-2.5 3z" fill="#6E6E6E"/>
<path d="M54.3 126l5.600-4.200 5 5.300-4.300 4.700z" fill="#F9C67E"/>
<path d="M60.600 121.200l3.200-2.600 5 5.300-3 3z" fill="#6A6A6A"/><path d="M65.200 120l3.300-2.300 1.600 1.800-3 2.700z" fill="#6A6A6A"/>
<path d="M60.200 121.600l5.100 5.400" stroke="#FFFFFF" stroke-width="0.8"/>
<g fill="none" stroke="#7A7A7A" stroke-width="1"><path d="M82.5 151v-4.500h4.500"/><path d="M85 149l3.500 3.500"/></g><path d="M89 149.5v3.500h-3.500z" fill="#7A7A7A"/>
<g fill="none" stroke="#7A7A7A" stroke-width="1"><path d="M296.5 151v-4.500h4.500"/><path d="M299 149l3.500 3.500"/></g><path d="M303 149.5v3.500h-3.500z" fill="#7A7A7A"/>
<g fill="none" stroke="#7A7A7A" stroke-width="1"><path d="M584.5 151v-4.500h4.500"/><path d="M587 149l3.500 3.500"/></g><path d="M591 149.5v3.500h-3.500z" fill="#7A7A7A"/>
<g fill="none" stroke="#7A7A7A" stroke-width="1"><path d="M731.5 151v-4.500h4.500"/><path d="M734 149l3.500 3.500"/></g><path d="M738 149.5v3.500h-3.500z" fill="#7A7A7A"/>
<path d="M203.0 86h5l-2.5 3z" fill="#6E6E6E"/>
<path d="M246.0 86h5l-2.5 3z" fill="#6E6E6E"/>
<path d="M725.0 86h5l-2.5 3z" fill="#6E6E6E"/>
<path d="M270.500 82.500l2.500-2.500 2.500 2.500z" fill="#1E7FC6"/>
<path d="M292 80.200h5l-2.500 2.500z" fill="#1E7FC6"/>
<path d="M171.0 117h5l-2.5 3z" fill="#6E6E6E"/>
<g fill="none" stroke="#5E5E5E" stroke-width="1"><path d="M193.500 111.500h12v12h-12z"/><path d="M199.500 111.500v12M193.500 117.500h12"/></g>
<path d="M214.0 117h5l-2.5 3z" fill="#6E6E6E"/>
<path d="M237.300 116.700l5.500-5.500 5.700 5.700-5.500 4.600z" fill="#FFFFFF" stroke="#5E5E5E" stroke-width="1"/>
<path d="M242.500 115v-4a1.300 1.300 0 0 0-2.600 0v1.500" fill="none" stroke="#5E5E5E" stroke-width="1"/>
<path d="M248.800 115.200c1.600 1.200 2.200 3 1.300 5.300l-1.700-1.200z" fill="#1E7FC6"/>
<path d="M235 122h16v4h-16z" fill="#FF7F1F"/>
<path d="M257.0 117h5l-2.5 3z" fill="#6E6E6E"/>
<path d="M269 122h16v4h-16z" fill="#FF0000"/>
<path d="M291.0 117h5l-2.5 3z" fill="#6E6E6E"/>
<path d="M320 79h14v1h-14z" fill="#5E5E5E"/>
<path d="M320 82h14v1h-14z" fill="#5E5E5E"/>
<path d="M320 85h14v1h-14z" fill="#5E5E5E"/>
<path d="M342 83h14v1h-14z" fill="#5E5E5E"/>
<path d="M342 86h14v1h-14z" fill="#5E5E5E"/>
<path d="M342 89h14v1h-14z" fill="#5E5E5E"/>
<path d="M364 88h14v1h-14z" fill="#5E5E5E"/>
<path d="M364 91h14v1h-14z" fill="#5E5E5E"/>
<path d="M364 94h14v1h-14z" fill="#5E5E5E"/>
<path d="M320 113h14v1h-14z" fill="#5E5E5E"/>
<path d="M320 116h10v1h-10z" fill="#5E5E5E"/>
<path d="M320 119h14v1h-14z" fill="#5E5E5E"/>
<path d="M320 122h10v1h-10z" fill="#5E5E5E"/>
<path d="M342.0 113h14v1h-14z" fill="#5E5E5E"/>
<path d="M344.0 116h10v1h-10z" fill="#5E5E5E"/>
<path d="M342.0 119h14v1h-14z" fill="#5E5E5E"/>
<path d="M344.0 122h10v1h-10z" fill="#5E5E5E"/>
<path d="M364 113h14v1h-14z" fill="#5E5E5E"/>
<path d="M368 116h10v1h-10z" fill="#5E5E5E"/>
<path d="M364 119h14v1h-14z" fill="#5E5E5E"/>
<path d="M368 122h10v1h-10z" fill="#5E5E5E"/>
<path d="M400.300 93.700l9.200-9.200" stroke="#5E5E5E" stroke-width="1.200" fill="none"/><path d="M405.800 84.300h3.800v3.800" stroke="#5E5E5E" stroke-width="1.100" fill="none"/>
<path d="M414.0 86h5l-2.5 3z" fill="#6E6E6E"/>
<path d="M394 111h16v1h-16zM394 123h16v1h-16z" fill="#5E5E5E"/>
<path d="M402 114h8v1h-8z" fill="#5E5E5E"/>
<path d="M402 117h8v1h-8z" fill="#5E5E5E"/>
<path d="M402 120h8v1h-8z" fill="#5E5E5E"/>
<path d="M400.5 117.500h-5.500M397.7 114.700l-2.900 2.800 2.900 2.800" stroke="#1E7FC6" stroke-width="1.700" fill="none"/>
<path d="M416 111h16v1h-16zM416 123h16v1h-16z" fill="#5E5E5E"/>
<path d="M424 114h8v1h-8z" fill="#5E5E5E"/>
<path d="M424 117h8v1h-8z" fill="#5E5E5E"/>
<path d="M424 120h8v1h-8z" fill="#5E5E5E"/>
<path d="M416 117.500h5.500M418.8 114.700l2.900 2.800-2.900 2.800" stroke="#1E7FC6" stroke-width="1.700" fill="none"/>
<path d="M460 88.500v2.500h-4M457.500 89.300l-1.800 1.700 1.800 1.700" stroke="#1E7FC6" stroke-width="1.100" fill="none"/>
<g fill="none" stroke="#6A6A6A" stroke-width="1"><path d="M447.500 110.500h14v14h-14z"/><path d="M447.500 113.500h14M447.500 121.500h14M454.500 110.500v3M454.500 121.500v3"/></g>
<path d="M450 117.500h9M451.500 116l-1.500 1.500 1.500 1.500M457.500 116l1.500 1.500-1.500 1.500" stroke="#1E7FC6" stroke-width="1" fill="none"/>
<path d="M578.0 117h5l-2.5 3z" fill="#6E6E6E"/>
<path d="M629.0 117h5l-2.5 3z" fill="#6E6E6E"/>
<path d="M701.500 114.500h-6M697.500 112l-2.500 2.500 2.500 2.500" stroke="#1E7FC6" stroke-width="1.200" fill="none"/>
<path d="M716 121.500h6M720 119l2.500 2.500-2.500 2.500" stroke="#1E7FC6" stroke-width="1.200" fill="none"/>
<path d="M774 73h28v25h-28z" fill="#FFFFFF"/>
<path d="M782 74h6v5.500h-6zM782 86h9v5.500h-9z" fill="#F4623A"/><path d="M782 80h11v5.500h-11zM782 92h4v5.500h-4z" fill="#1E7FC6"/>
<g fill="none" stroke="#ABABAB" stroke-width="1"><path d="M781.500 73.500v24M794.500 73.500v24M774.500 79.500h27M774.500 85.500h27M774.500 91.500h27"/></g>
<path d="M774.500 73.500h27v24h-27z" fill="none" stroke="#8A8A8A" stroke-width="1"/>
<path d="M787 89h17v14h-17z" fill="#FFFFFF"/>
<path d="M788.500 90.500h15v12h-15z" fill="#FFFFFF" stroke="#7A7A7A" stroke-width="1"/>
<text x="791.6" y="99.8" font-family="'DejaVu Sans','Liberation Sans',sans-serif" font-size="11.5" font-weight="400" font-style="normal" fill="#3A3A3A" textLength="8.600" lengthAdjust="spacingAndGlyphs">≠</text>
<path d="M818.0 128h5l-2.5 3z" fill="#6E6E6E"/>
<path d="M849.500 75.500h24v20h-24z" fill="#FFFFFF"/><path d="M855.500 80.500h18v15h-18z" fill="#BDD7EE"/>
<g fill="none" stroke="#ABABAB" stroke-width="1"><path d="M855.500 75.500v20M861.500 75.500v20M867.500 75.500v20M849.500 80.500h24M849.500 85.500h24M849.500 90.500h24"/></g>
<path d="M849.500 75.500h24v20h-24z" fill="none" stroke="#8A8A8A" stroke-width="1"/>
<path d="M877.8 80.5v7.2l-7.900 7.200-2.700-2.600z" fill="#FFFFFF" stroke="#FFFFFF" stroke-width="2.400" stroke-linejoin="round"/>
<circle cx="865.3" cy="98.0" r="4.600" fill="#FFFFFF"/>
<path d="M877.8 80.5v7.2l-7.900 7.200-2.700-2.600z" fill="#7F7F7F"/>
<path d="M870.8 88.1l3 3" stroke="#FFFFFF" stroke-width="1" fill="none"/>
<circle cx="865.3" cy="98.0" r="3.500" fill="#FFFFFF" stroke="#1E7FC6" stroke-width="1"/>
<path d="M855.3 102.9l6.400-5.300h3.400l1.400 2.800-2.200 2.500z" fill="#1E7FC6"/>
<path d="M891.0 128h5l-2.5 3z" fill="#6E6E6E"/>
<path d="M913.500 73.500h25v21h-25z" fill="#FFFFFF"/><path d="M918.500 78.500h14v10h-14z" fill="#BDD7EE"/>
<g fill="none" stroke="#ABABAB" stroke-width="1"><path d="M918.500 73.500v21M932.500 73.500v21M913.500 78.500h25M913.500 88.500h25"/></g>
<path d="M913.500 73.500h25v21h-25z" fill="none" stroke="#8A8A8A" stroke-width="1"/>
<path d="M942 78.5v7.2l-7.900 7.200-2.700-2.600z" fill="#FFFFFF" stroke="#FFFFFF" stroke-width="2.400" stroke-linejoin="round"/>
<circle cx="929.5" cy="96.0" r="4.600" fill="#FFFFFF"/>
<path d="M942 78.5v7.2l-7.900 7.200-2.700-2.600z" fill="#7F7F7F"/>
<path d="M935 86.1l3 3" stroke="#FFFFFF" stroke-width="1" fill="none"/>
<circle cx="929.5" cy="96.0" r="3.500" fill="#FFFFFF" stroke="#1E7FC6" stroke-width="1"/>
<path d="M919.5 100.9l6.400-5.300h3.400l1.400 2.800-2.200 2.500z" fill="#1E7FC6"/>
<path d="M939.0 128h5l-2.5 3z" fill="#6E6E6E"/>
<path d="M978.5 73.5h14v5h-14z" fill="#FFFFFF" stroke="#7F7F7F" stroke-width="1"/>
<path d="M985.5 73.5v5" stroke="#7F7F7F" stroke-width="1"/>
<path d="M989.5 81.5h14v5h-14z" fill="#BDD7EE" stroke="#7F7F7F" stroke-width="1"/>
<path d="M996.5 81.5v5" stroke="#7F7F7F" stroke-width="1"/>
<path d="M978.5 89.5h14v10h-14z" fill="#FFFFFF" stroke="#7F7F7F" stroke-width="1"/>
<path d="M985.5 89.5v10" stroke="#7F7F7F" stroke-width="1"/>
<path d="M978.500 94.500h14" stroke="#7F7F7F" stroke-width="1"/>
<path d="M986 84h-6M982.800 81.300l-2.800 2.700 2.800 2.700" stroke="#1E7FC6" stroke-width="1.600" fill="none"/>
<path d="M988.0 128h5l-2.5 3z" fill="#6E6E6E"/>
<path d="M1023.5 73.5h14v5h-14z" fill="#FFFFFF" stroke="#7F7F7F" stroke-width="1"/>
<path d="M1030.5 73.5v5" stroke="#7F7F7F" stroke-width="1"/>
<path d="M1029.5 81.5h10v5h-10z" fill="#BDD7EE" stroke="#7F7F7F" stroke-width="1"/>
<path d="M1034.5 81.5v5" stroke="#7F7F7F" stroke-width="1"/>
<path d="M1023.5 90.5h14v10h-14z" fill="#FFFFFF" stroke="#7F7F7F" stroke-width="1"/>
<path d="M1030.5 90.5v10" stroke="#7F7F7F" stroke-width="1"/>
<path d="M1023.500 95.500h14" stroke="#7F7F7F" stroke-width="1"/>
<path d="M1036.500 88.500h3v3h-3z" fill="#FFFFFF"/>
<path d="M1038 79.500c3 1.500 8 6 13.500 12" stroke="#F4623A" stroke-width="2.200" fill="none" stroke-linecap="round"/><path d="M1051.500 79.500c-5 2.500-9.500 6.500-13 12" stroke="#F4623A" stroke-width="1.800" fill="none" stroke-linecap="round"/>
<path d="M1034.0 128h5l-2.5 3z" fill="#6E6E6E"/>
<path d="M1072.500 72v5M1094.500 72v5M1074.500 74.500h18M1077 72l-2.500 2.500 2.500 2.500M1090 72l2.500 2.500-2.500 2.500" stroke="#1E7FC6" stroke-width="1" fill="none"/>
<path d="M1072.500 78.500h27v20h-27z" fill="#FFFFFF"/>
<g fill="none" stroke="#ABABAB" stroke-width="1"><path d="M1079.500 78.500v20M1087.500 78.500v20M1094.500 78.500v20M1072.500 83.500h27M1072.500 93.500h27"/></g>
<path d="M1080 84h7v9h-7z" fill="#1E7FC6"/>
<path d="M1072.500 78.500h27v20h-27z" fill="none" stroke="#8A8A8A" stroke-width="1"/>
<path d="M1072.500 98.500v3.500h6l1.500-3.500M1080.500 98.500l.8 3.500h6.200l3-3.500" fill="none" stroke="#8A8A8A" stroke-width="1"/>
<path d="M1083.0 128h5l-2.5 3z" fill="#6E6E6E"/>
<text x="1129.8" y="85.6" font-family="'Liberation Serif','DejaVu Serif',serif" font-size="20.5" font-weight="700" font-style="normal" fill="#444" textLength="15.400" lengthAdjust="spacingAndGlyphs">Σ</text>
<path d="M1214.0 78h5l-2.5 3z" fill="#6E6E6E"/>
<path d="M1131.500 94.500h13v15h-13z" fill="#FFFFFF" stroke="#7F7F7F" stroke-width="1"/><path d="M1131 94h14v3.300h-14z" fill="#7A7A7A"/>
<path d="M1138 99.300v7.500M1134.700 103.700l3.300 3.300 3.300-3.300" stroke="#1E7FC6" stroke-width="1.700" fill="none"/>
<path d="M1194.0 101h5l-2.5 3z" fill="#6E6E6E"/>
<path d="M1140.500 118l3.700 3.700-9 9-3.900-3.900z" fill="#FB8B94"/><path d="M1133.300 124.600l4 4" stroke="#FFFFFF" stroke-width="0.900"/>
<path d="M1184.0 124h5l-2.5 3z" fill="#6E6E6E"/>
<path d="M1249 81h17l-6.700 7.600v7h-3.500v-7z" fill="#7F7F7F"/><path d="M1256.800 89.200h1.500v5.400h-1.500z" fill="#FFFFFF"/><path d="M1251 82.300l6.300 6.800" stroke="#FFFFFF" stroke-width="1.200"/>
<path d="M1265.0 128h5l-2.5 3z" fill="#6E6E6E"/>
<circle cx="1320" cy="83" r="8.900" fill="none" stroke="#1E7FC6" stroke-width="2"/><path d="M1313 90.300l-7.300 7.500" stroke="#1E7FC6" stroke-width="3.900" stroke-linecap="round"/>
<path d="M1345.0 128h5l-2.5 3z" fill="#6E6E6E"/>
<path d="M1420.800 151.200l3.700-3.900 3.700 3.900" fill="none" stroke="#666" stroke-width="2"/>
<path d="M94 178h7l-3.500 4z" fill="#777"/>
<path d="M122 175.5h2v2h-2z" fill="#ABABAB"/>
<path d="M122 180h2v2h-2z" fill="#ABABAB"/>
<path d="M122 184.5h2v2h-2z" fill="#ABABAB"/>
<path d="M152 176.500l9.500 9M161.500 176.500l-9.500 9" stroke="#C3C3C3" stroke-width="1.500" fill="none"/>
<path d="M187.500 181.500l4 4 8-9" stroke="#C9C9C9" stroke-width="2" fill="none"/>
<path d="M1421.500 177.500l4 4 4-4" fill="none" stroke="#6A6A6A" stroke-width="1.800"/>
<circle cx="82" cy="743.500" r="3" fill="#6A6A6A"/><path d="M85 741.500h7v2h-7z" fill="#6A6A6A"/><path d="M80.500 746.500v6h11v-9" fill="none" stroke="#6A6A6A" stroke-width="1"/><path d="M82.500 747.500h7M82.500 749.500h7" stroke="#6A6A6A" stroke-width="1" stroke-dasharray="2 1"/>
<g fill="none" stroke="#5E5E5E" stroke-width="1.200"><path d="M1154.600 740.600h12v12h-12z"/><path d="M1158.600 740.600v12M1162.600 740.600v12M1154.600 744.600h12M1154.600 748.600h12"/></g>
<g fill="none" stroke="#5E5E5E" stroke-width="1"><path d="M1192.500 740.500h13v12h-13z"/><path d="M1195.500 742.500h7v8h-7z"/><path d="M1197 744.500h4M1197 746.500h4M1197 748.500h4"/></g>
<g fill="none" stroke="#5E5E5E" stroke-width="1"><path d="M1230.500 740.500h13v12h-13z"/><path d="M1234.500 740.500v6.500M1238.500 740.500v6.500M1230.500 747.500h8v-7"/></g>
<circle cx="1413" cy="730.500" r="25.500" fill="#FFFFFF" fill-opacity="0.480" stroke="#C9DCEB" stroke-opacity="0.500" stroke-width="1"/>
<path d="M1415.6 746.4C1415.3 745.5 1415.1 742.6 1414.0 740.9C1412.9 739.2 1411.5 737.7 1409.2 736.2C1407.0 734.8 1402.5 734.5 1400.5 732.2C1398.5 730.0 1396.7 726.0 1397.0 722.7C1397.3 719.4 1399.7 714.8 1402.5 712.6C1405.3 710.4 1410.6 709.3 1414.0 709.3C1417.4 709.3 1420.7 710.8 1422.7 712.4C1424.7 714.0 1425.5 716.7 1425.8 718.8C1426.1 720.9 1425.0 723.0 1424.3 725.1C1423.6 727.2 1422.0 729.5 1421.5 731.4C1421.0 733.2 1420.9 735.0 1421.1 736.2C1421.3 737.4 1422.4 738.1 1422.7 738.5" fill="none" stroke="#4A92D2" stroke-opacity="0.920" stroke-width="2" stroke-linejoin="round" stroke-linecap="round"/>
<path d="M1422.7 738.5C1421.8 739.0 1418.5 740.5 1417.2 741.7C1415.9 742.9 1415.2 745.0 1414.8 745.6" fill="none" stroke="#4A92D2" stroke-opacity="0.920" stroke-width="2" stroke-linejoin="round" stroke-linecap="round"/>
<path d="M1414.8 745.6C1415.8 745.4 1419.0 744.5 1421.0 744.3C1423.0 744.0 1425.5 743.9 1426.6 744.1C1427.7 744.3 1428.1 744.6 1427.4 745.6C1426.8 746.6 1424.5 749.1 1422.7 750.4C1420.9 751.7 1417.5 752.7 1416.4 753.2" fill="none" stroke="#4A92D2" stroke-opacity="0.920" stroke-width="2" stroke-linejoin="round" stroke-linecap="round"/>
<text x="262.2" y="93" font-family="'Liberation Sans',sans-serif" font-size="13.5" font-weight="700" font-style="normal" fill="#5E5E5E" textLength="9.500" lengthAdjust="spacingAndGlyphs">A</text>
<text x="285" y="93" font-family="'Liberation Sans',sans-serif" font-size="10.5" font-weight="700" font-style="normal" fill="#5E5E5E" textLength="7.500" lengthAdjust="spacingAndGlyphs">A</text>
<text x="272.6" y="122" font-family="'Liberation Sans',sans-serif" font-size="14" font-weight="700" font-style="normal" fill="#666666" textLength="9.800" lengthAdjust="spacingAndGlyphs">A</text>
<text x="449" y="86.6" font-family="'Liberation Sans',sans-serif" font-size="10" font-weight="400" font-style="normal" fill="#5A5A5A" stroke="#5A5A5A" stroke-width="0.350">ab</text>
<text x="449.2" y="93.9" font-family="'Liberation Sans',sans-serif" font-size="10" font-weight="400" font-style="normal" fill="#5A5A5A" stroke="#5A5A5A" stroke-width="0.350">c</text>
<text x="0" y="0" font-family="'Liberation Sans',sans-serif" font-size="9.5" font-weight="400" font-style="normal" fill="#5A5A5A" transform="translate(396.600 90.600) rotate(-45)" stroke="#5A5A5A" stroke-width="0.300">ab</text>
<text x="611.5" y="123.5" font-family="'Liberation Sans',sans-serif" font-size="17" font-weight="400" font-style="normal" fill="#555" textLength="7.600" lengthAdjust="spacingAndGlyphs">$</text>
<text x="643.3" y="124.2" font-family="'Liberation Sans',sans-serif" font-size="15.6" font-weight="400" font-style="normal" fill="#555" textLength="12.400" lengthAdjust="spacingAndGlyphs">%</text>
<text x="663.8" y="121" font-family="'Liberation Sans',sans-serif" font-size="9.8" font-weight="400" font-style="normal" fill="#555" textLength="14.400" lengthAdjust="spacingAndGlyphs" stroke="#555" stroke-width="0.200">000</text>
<text x="704" y="116.2" font-family="'Liberation Sans',sans-serif" font-size="7.5" font-weight="400" font-style="normal" fill="#444" stroke="#444" stroke-width="0.300">0</text>
<text x="701.6" y="117" font-family="'Liberation Sans',sans-serif" font-size="7.5" font-weight="400" font-style="normal" fill="#444" stroke="#444" stroke-width="0.300">,</text>
<text x="696.8" y="123.8" font-family="'Liberation Sans',sans-serif" font-size="7.5" font-weight="400" font-style="normal" fill="#444" textLength="11.200" stroke="#444" stroke-width="0.300">,00</text>
<text x="718.8" y="116.2" font-family="'Liberation Sans',sans-serif" font-size="7.5" font-weight="400" font-style="normal" fill="#444" textLength="11.200" stroke="#444" stroke-width="0.300">,00</text>
<text x="723" y="123.8" font-family="'Liberation Sans',sans-serif" font-size="7.5" font-weight="400" font-style="normal" fill="#444" textLength="7" stroke="#444" stroke-width="0.300">,0</text>
<text x="1237" y="86" font-family="'Liberation Sans',sans-serif" font-size="16.5" font-weight="400" font-style="normal" fill="#1E7FC6" textLength="11" lengthAdjust="spacingAndGlyphs" stroke="#1E7FC6" stroke-width="0.500">A</text>
<text x="1237.7" y="99.8" font-family="'Liberation Sans',sans-serif" font-size="16" font-weight="400" font-style="normal" fill="#A85FC0" textLength="10" lengthAdjust="spacingAndGlyphs" stroke="#A85FC0" stroke-width="0.500">Z</text>
<text x="223.5" y="185.5" font-family="'Liberation Serif',serif" font-size="15" font-weight="700" font-style="italic" fill="#444" textLength="11" lengthAdjust="spacingAndGlyphs">fx</text></svg>
</div>
</body></html>
